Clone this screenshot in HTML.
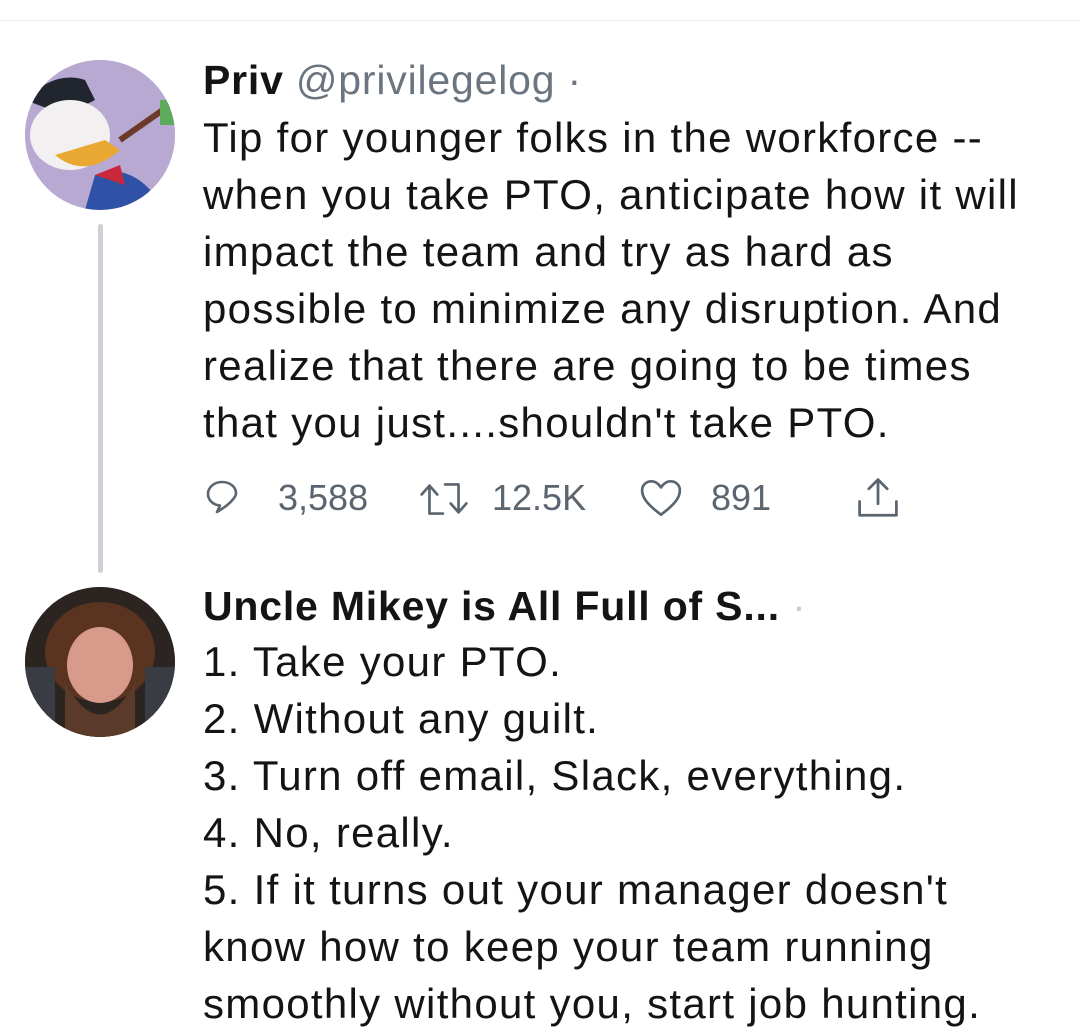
<!DOCTYPE html>
<html><head><meta charset="utf-8"><style>
body{margin:0;width:1080px;height:1031px;background:#fff;font-family:"Liberation Sans",Arial,sans-serif;color:#141414;position:relative;overflow:hidden}
.t{position:absolute;left:203px;font-size:42px;line-height:57px;white-space:nowrap;letter-spacing:1.3px}
.n{font-weight:bold}
.h{color:#6b7580;font-weight:normal}
.av{position:absolute;left:25px;width:150px;height:150px;border-radius:50%;overflow:hidden}
.line{position:absolute;left:98px;width:5px;top:224px;height:349px;background:#cdd0d4;border-radius:3px}
.act{position:absolute;top:478px;left:203px;height:40px;font-size:36px;color:#5b6570;line-height:40px}
.act span{position:absolute;white-space:nowrap}
</style></head><body>
<div style="position:absolute;top:20px;left:0;width:1080px;height:1px;background:#eee"></div>
<div class="av" style="top:60px;background:#b3a6cf">
<svg width="150" height="150" viewBox="0 0 150 150"><rect width="150" height="150" fill="#b8a9d2"/><path d="M0 40 Q30 10 60 20 L70 40 L40 55 Z" fill="#20252e"/><ellipse cx="45" cy="75" rx="40" ry="35" fill="#f2f0f0"/><path d="M30 95 Q60 120 95 90 L80 80 Z" fill="#e8a832"/><path d="M60 150 L70 115 Q110 100 140 150Z" fill="#2f52a6"/><path d="M70 115 L95 105 L100 125Z" fill="#c8283a"/><path d="M95 80 L145 45" stroke="#6b3a2a" stroke-width="6"/><rect x="135" y="40" width="15" height="25" fill="#5caa5a"/></svg>
</div>
<div class="line"></div>
<div class="av" style="top:587px;background:#3a2a20">
<svg width="150" height="150" viewBox="0 0 150 150"><rect width="150" height="150" fill="#2c2420"/><ellipse cx="75" cy="65" rx="55" ry="50" fill="#5a3420"/><ellipse cx="75" cy="78" rx="33" ry="38" fill="#d89a8a"/><path d="M40 95 Q75 160 110 95 L110 150 L40 150Z" fill="#5a3a28"/><rect x="0" y="80" width="30" height="70" fill="#3a3c44"/><rect x="120" y="80" width="30" height="70" fill="#3a3c44"/></svg>
</div>

<div class="t n" style="top:52px;font-size:41px;letter-spacing:0.8px">Priv <span class="h">@privilegelog ·</span></div>
<div class="t" style="top:109px">Tip for younger folks in the workforce --<br>when you take PTO, anticipate how it will<br>impact the team and try as hard as<br>possible to minimize any disruption. And<br>realize that there are going to be times<br>that you just....shouldn't take PTO.</div>

<div class="act">
<svg style="position:absolute;left:2px;top:0" width="34" height="38" viewBox="0 0 34 36"><path d="M17 3C9 3 3 8.5 3 15c0 6 5 11 12 11.5L12 33c5-3 13-8 17-14 1.5-2 2-4 2-5 0-6-6-11-14-11z" fill="none" stroke="#5b6570" stroke-width="2.6" stroke-linejoin="round"/></svg>
<span style="left:75px">3,588</span>
<svg style="position:absolute;left:214px;top:2px" width="54" height="38" viewBox="0 0 44 34"><path d="M9 30V6M2 13l7-8 7 8M9 30h12M35 4v24M28 21l7 8 7-8M35 4H23" fill="none" stroke="#5b6570" stroke-width="2.4" stroke-linecap="round" stroke-linejoin="round"/></svg>
<span style="left:289px">12.5K</span>
<svg style="position:absolute;left:435px;top:0" width="46" height="40" viewBox="0 0 40 36"><path d="M20 33C8 24 3 18 3 11 3 6 7 3 11.5 3c4 0 6.5 2.5 8.5 5.5C22 5.5 24.5 3 28.5 3 33 3 37 6 37 11c0 7-5 13-17 22z" fill="none" stroke="#5b6570" stroke-width="2.4" stroke-linejoin="round"/></svg>
<span style="left:508px">891</span>
<svg style="position:absolute;left:652px;top:-2px" width="46" height="44" viewBox="0 0 40 38"><path d="M20 24V3M12 11l8-8 8 8M4 22v12h32V22" fill="none" stroke="#5b6570" stroke-width="2.4" stroke-linecap="round" stroke-linejoin="round"/></svg>
</div>

<div class="t n" style="top:578px;font-size:41px;letter-spacing:0.8px">Uncle Mikey is All Full of S... <span class="h" style="color:#ccc">·</span></div>
<div class="t" style="top:633px">1. Take your PTO.<br>2. Without any guilt.<br>3. Turn off email, Slack, everything.<br>4. No, really.<br>5. If it turns out your manager doesn't<br>know how to keep your team running<br>smoothly without you, start job hunting.</div>
</body></html>
